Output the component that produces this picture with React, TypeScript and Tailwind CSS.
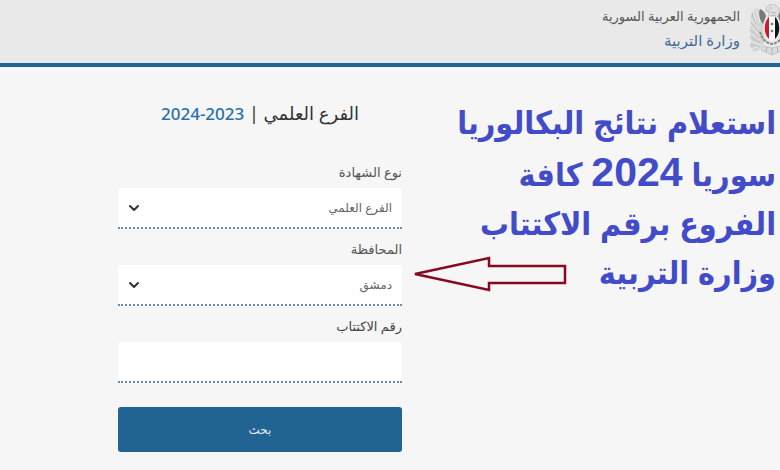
// @ts-nocheck
import { useState } from 'react';
import { ChevronDown } from 'lucide-react';

function Emblem() {
  return (
    <svg viewBox="0 0 48 52" className="w-12 h-[52px] shrink-0 -mr-4" fill="none" aria-hidden="true">
      {/* wings */}
      <path d="M17 9C12 5 9 4 6 5 3 9 2 14 3 19l-1 8 1 8-1 8 4 5 6-3 5-8-2-12z" fill="#d4d4d4" />
      <path d="M31 9c5-4 8-5 11-4 3 4 4 9 3 14l1 8-1 8 1 8-4 5-6-3-5-8 2-12z" fill="#d4d4d4" />
      <path d="M5 6l3 12M8 5l4 14M3 15l8 10M3 22l9 9M3 29l9 7M2 37l11 4M4 45l7-4M43 6l-3 12M40 5l-4 14M45 15l-8 10M45 22l-9 9M45 29l-9 7M46 37l-11 4" stroke="#ececec" strokeWidth="1" />
      <path d="M4 9l4 12M3 19l8 9M2 26l9 8M2 33l10 6M3 41l9 1M44 9l-4 12M45 19l-8 9M46 26l-9 8M46 33l-10 6" stroke="#aaa" strokeWidth=".9" strokeDasharray="1.5 1.2" />
      <path d="M12 5c3 1 5 4 6 7l-3 8c-3-4-5-9-3-15z" fill="#777" />
      <path d="M36 5c-3 1-5 4-6 7l3 8c3-4 5-9 3-15z" fill="#777" />
      {/* head */}
      <path d="M18 5c1-4 6-6 9-4 4 2 5 5 4 8l-2 5h-9l1-8-3 2z" fill="#e0e0e0" stroke="#bbb" strokeWidth=".8" />
      <path d="M21 4h3M23 8l5 1M22 11l6 1" stroke="#aaa" strokeWidth=".8" />
      {/* shield */}
      <path d="M21 13v22c-3-3-5-8-4-13 0-4 2-7 4-9z" fill="#cf1a2c" />
      <path d="M21 13h6v22l-3 2-3-2z" fill="#f7f7f7" />
      <path d="M27 13v22c3-3 5-8 4-13 0-4-2-7-4-9z" fill="#151515" />
      <circle cx="24" cy="20" r="1.3" fill="#3c9a64" />
      <circle cx="24" cy="27" r="1.3" fill="#3c9a64" />
      {/* ribbon and tail */}
      <path d="M12 28c2 7 6 11 12 12 6-1 10-5 12-12" stroke="#888" strokeWidth="2" strokeDasharray="3 1" />
      <path d="M15 42l9 2 9-2 2 4-11 5-11-5z" fill="#dcdcdc" stroke="#bbb" strokeWidth=".8" />
      <path d="M19 43l-1 5M24 44v6M29 43l1 5" stroke="#aaa" strokeWidth=".8" />
    </svg>
  );
}

function SelectField({ id, label, value, onChange, options }) {
  return (
    <div>
      <label htmlFor={id} className="block h-7 leading-6 text-[13px] text-[#555]">{label}</label>
      <div className="relative">
        <select
          id={id}
          value={value}
          onChange={(e) => onChange(e.target.value)}
          className="block w-full h-[41px] appearance-none rounded-t-sm border-b-2 border-dotted border-[#5f8fb8] bg-white pr-2.5 pl-8 text-xs text-[#666]"
        >
          {options.map((o) => <option key={o}>{o}</option>)}
        </select>
        <ChevronDown className="absolute left-2 top-3 size-4 text-[#333] pointer-events-none" strokeWidth={3} />
      </div>
    </div>
  );
}

export default function App() {
  const [branch, setBranch] = useState('الفرع العلمي');
  const [city, setCity] = useState('دمشق');
  const [number, setNumber] = useState('');

  return (
    <div dir="rtl" className="min-h-screen bg-[#f6f6f6] overflow-hidden font-['Noto_Sans','DejaVu_Sans',sans-serif]">
      <header className="flex items-start gap-2 h-[67px] pt-1 bg-[#e9e9e9] border-b-4 border-[#216494] overflow-hidden">
        <Emblem />
        <div>
          <p className="text-[13px] leading-6 text-[#555]">الجمهورية العربية السورية</p>
          <p className="text-[15px] leading-6 text-[#3f6d9c]">وزارة التربية</p>
        </div>
      </header>

      <main className="grid grid-cols-[378px_1fr]">
        <section className="pt-8 pr-1 font-['Liberation_Sans','DejaVu_Sans_Condensed','DejaVu_Sans',sans-serif]">
          <h1 className="text-[32px] leading-[49px] font-bold text-[#424bc8] whitespace-nowrap">
            <span className="block">استعلام نتائج البكالوريا</span>
            <span className="block">سوريا <span className="text-[41px]">2024</span> كافة</span>
            <span className="block">الفروع برقم الاكتتاب</span>
            <span className="flex items-center gap-8">
              وزارة التربية
              <svg viewBox="0 0 154 36" className="w-[154px] h-9 shrink-0" fill="none" aria-hidden="true">
                <path d="M2 18L76 2v8h76v17H76v7z" stroke="#850a20" strokeWidth="2.5" />
              </svg>
            </span>
          </h1>
        </section>

        <section className="pl-[118px] pt-8">
          <h2 className="text-lg leading-7 text-center text-[#333]">
            الفرع العلمي | <span dir="ltr" className="text-[17px] font-medium text-[#2a70a8]">2024-2023</span>
          </h2>
          <form onSubmit={(e) => e.preventDefault()} className="pt-8 space-y-2">
            <SelectField id="branch" label="نوع الشهادة" value={branch} onChange={setBranch} options={['الفرع العلمي', 'الفرع الأدبي']} />
            <SelectField id="city" label="المحافظة" value={city} onChange={setCity} options={['دمشق', 'حلب', 'حمص']} />
            <div>
              <label htmlFor="number" className="block h-7 leading-6 text-[13px] text-[#444]">رقم الاكتتاب</label>
              <input
                id="number"
                value={number}
                onChange={(e) => setNumber(e.target.value)}
                className="block w-full h-[41px] rounded-t-sm border-b-2 border-dotted border-[#5f8fb8] bg-white px-2.5 text-xs text-[#666]"
              />
            </div>
            <button type="submit" className="block w-full h-[45px] mt-6 rounded-[3px] bg-[#216494] text-xs text-[#e4eef6]">بحث</button>
          </form>
        </section>
      </main>
    </div>
  );
}
